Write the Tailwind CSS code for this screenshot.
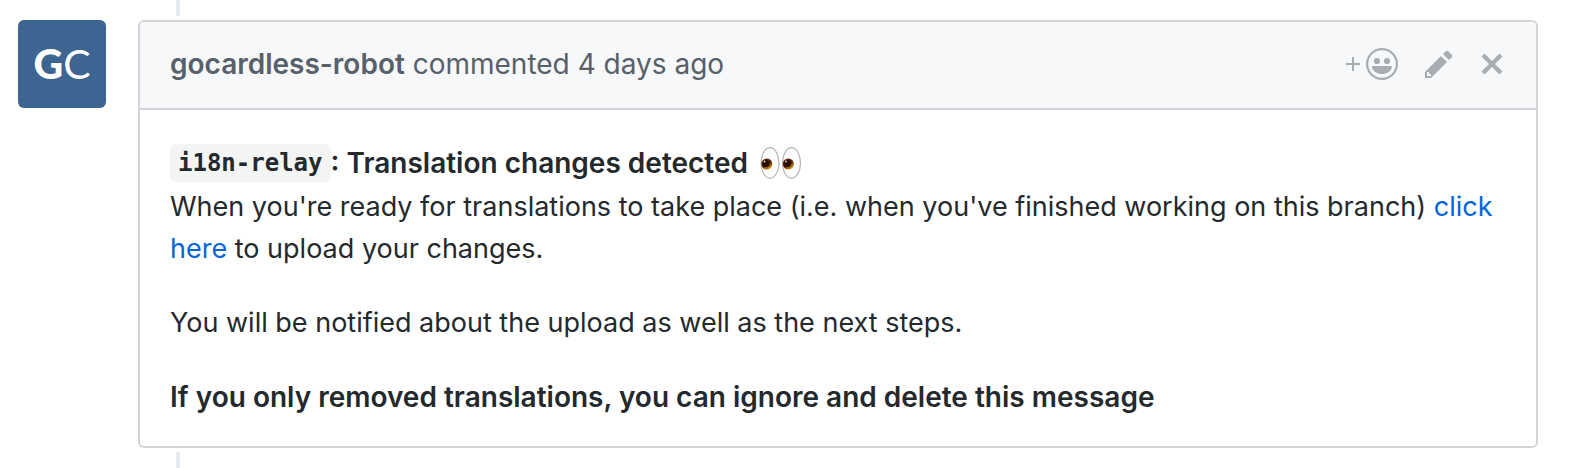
<!DOCTYPE html>
<html lang="en">
<head>
    <meta charset="UTF-8">
    <meta name="viewport" content="width=device-width, initial-scale=1.0">
    <title>Comment</title>
    <script src="https://cdn.jsdelivr.net/npm/@tailwindcss/browser@4"></script>
</head>
<body class="bg-white font-[Inter,sans-serif] text-[27px] leading-[42px] text-[#24292e]">
    <main class="flex gap-8 pl-[18px] pr-10">
        <!-- Avatar -->
        <a href="#" aria-label="gocardless-robot" class="mt-5 flex size-[88px] shrink-0 items-center justify-center rounded-md bg-[#3c6591] font-[Lato,sans-serif] text-[41px] text-white">
            <span class="font-black">G</span><span class="font-normal">C</span>
        </a>

        <div class="min-w-0 flex-1">
            <!-- Timeline -->
            <div class="mb-1 ml-[38px] h-4 w-1 bg-[#e6ebf1]"></div>

            <!-- Comment -->
            <article class="rounded-md border-2 border-[#d1d5da]">
                <header class="flex items-center justify-between rounded-t border-b-2 border-[#d1d5da] bg-[#f6f8fa] pt-[21px] pb-[23px] pl-[30px] pr-8 text-[#586069]">
                    <h3 class="text-[28px]"><strong class="font-semibold">gocardless-robot</strong> commented 4 days ago</h3>
                    <div class="flex items-center gap-[27px] text-[#a8adb3]">
                        <button type="button" aria-label="Add your reaction" class="flex items-center gap-[6px]">
                            <svg class="size-[14px]" viewBox="0 0 14 14" fill="currentColor"><path d="M6 0h2v6h6v2H8v6H6V8H0V6h6z"/></svg>
                            <svg class="size-8" viewBox="0 0 32 32" fill="currentColor">
                                <circle cx="16" cy="16" r="14.9" fill="none" stroke="currentColor" stroke-width="2.2"/>
                                <circle cx="11" cy="13" r="3.1"/>
                                <circle cx="21" cy="13" r="3.1"/>
                                <path d="M7 18h18a1 1 0 0 1 1 1.200C24.800 23.600 20.800 26 16 26S7.200 23.600 6 19.200A1 1 0 0 1 7 18z"/>
                            </svg>
                        </button>
                        <button type="button" aria-label="Edit comment">
                            <svg class="h-8 w-7" viewBox="0 0 14 16" fill="currentColor"><path fill-rule="evenodd" d="M0 12v3h3l8-8-3-3-8 8zm3 2H1v-2h1v1h1v1zm10.300-9.300L12 6 9 3l1.300-1.300a.996.996 0 0 1 1.410 0l1.590 1.590c.39.39.39 1.020 0 1.410z"/></svg>
                        </button>
                        <button type="button" aria-label="Delete comment">
                            <svg class="h-8 w-6" viewBox="0 0 12 16" fill="currentColor"><path d="M7.480 8l3.750 3.750-1.480 1.480L6 9.480l-3.750 3.750-1.480-1.480L4.520 8 .77 4.250l1.480-1.480L6 6.520l3.750-3.750 1.480 1.480L7.480 8z"/></svg>
                        </button>
                    </div>
                </header>

                <div class="space-y-8 px-[30px] pt-8 pb-7">
                    <div>
                        <p class="flex items-center pb-0.5 text-[28px] font-semibold">
                            <code class="rounded-md bg-[#f3f4f4] px-2 font-['DejaVu_Sans_Mono',monospace] text-[24px] leading-[38px]">i18n-relay</code>
                            <span>: Translation changes detected</span>
                            <svg class="ml-3 h-8 w-[42px]" viewBox="0 0 42 32" role="img" aria-label="eyes">
                                <defs>
                                    <linearGradient id="iris" x1="0.2" y1="0.1" x2="0.8" y2="1">
                                        <stop offset="0.5" stop-color="#5a2506"/>
                                        <stop offset="1" stop-color="#f2b20c"/>
                                    </linearGradient>
                                </defs>
                                <g fill="#fdfdfd" stroke="#b4b4b4" stroke-width="1.200">
                                    <ellipse cx="10" cy="16" rx="9" ry="15.300"/>
                                    <ellipse cx="31.500" cy="16" rx="9" ry="15.300"/>
                                </g>
                                <g fill="url(#iris)">
                                    <circle cx="6.800" cy="17" r="5.500"/>
                                    <circle cx="28.300" cy="17" r="5.500"/>
                                </g>
                                <g fill="#2a0d02">
                                    <circle cx="6" cy="16.500" r="3.600"/>
                                    <circle cx="27.500" cy="16.500" r="3.600"/>
                                </g>
                                <g fill="#e8d5c8">
                                    <circle cx="4.500" cy="14.500" r="0.900"/>
                                    <circle cx="26" cy="14.500" r="0.900"/>
                                </g>
                            </svg>
                        </p>
                        <p>When you're ready for translations to take place (i.e. when you've finished working on this branch) <a href="#" class="text-[#0366d6]">click here</a> to upload your changes.</p>
                    </div>
                    <p>You will be notified about the upload as well as the next steps.</p>
                    <p class="text-[28px] font-semibold">If you only removed translations, you can ignore and delete this message</p>
                </div>
            </article>

            <div class="mt-1 ml-[38px] h-4 w-1 bg-[#e6ebf1]"></div>
        </div>
    </main>
</body>
</html>
